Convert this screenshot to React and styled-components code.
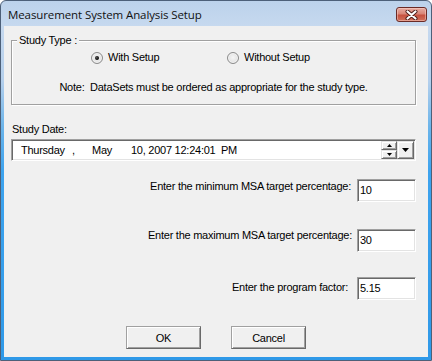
import React from "react";
import styled, { createGlobalStyle } from "styled-components";

const Global = createGlobalStyle`
  html, body { margin: 0; padding: 0; background: #ffffff; }
  body { width: 432px; height: 361px; overflow: hidden; }
`;

const Window = styled.div`
  width: 432px;
  height: 361px;
  box-sizing: border-box;
  display: flex;
  flex-direction: column;
  border: 1px solid #4d6079;
  border-radius: 6px 6px 0 0;
  padding: 0 3px 3px 3px;
  background: linear-gradient(
    to bottom,
    #bcd2eb 0px,
    #c6d9ef 25px,
    #b4cfec 80px,
    #6db5ea 125px,
    #3da3ee 170px,
    #2f99e8 361px
  );
`;

const TitleBar = styled.div`
  height: 25px;
  flex: none;
  display: flex;
  align-items: flex-start;
  padding-left: 4px;
`;

const Title = styled.div`
  font-family: "Open Sans", "Noto Sans", sans-serif;
  font-size: 11.5px;
  line-height: 16px;
  margin-top: 6px;
  color: #111;
  letter-spacing: -0.1px;
`;

const CloseButton = styled.div`
  margin-left: auto;
  margin-top: 6px;
  margin-right: 1px;
  width: 31px;
  height: 15px;
  box-sizing: border-box;
  border: 1px solid #6a2b27;
  border-radius: 3px;
  background: linear-gradient(to bottom, #e6aca2 0%, #d98576 45%, #c6513f 55%, #d0715c 100%);
  box-shadow: inset 0 0 0 1px rgba(255, 220, 210, 0.45);
  display: flex;
  align-items: center;
  justify-content: center;
`;

const Client = styled.div`
  flex: 1;
  background: #f0f0f0;
  display: flex;
  flex-direction: column;
  padding: 14px 12px 0 7px;
  font-family: "Liberation Sans", Arial, sans-serif;
  font-size: 11px;
  line-height: 13px;
  letter-spacing: -0.25px;
  color: #000;
`;

const Group = styled.div`
  position: relative;
  height: 65px;
  box-sizing: border-box;
  border: 1px solid #a0a0a0;
  box-shadow: inset 1px 1px 0 #ffffff, 1px 1px 0 #ffffff;
`;

const Legend = styled.span`
  position: absolute;
  top: -7px;
  left: 5px;
  padding: 0 2px;
  background: #f0f0f0;
`;

const RadioRow = styled.div`
  display: grid;
  grid-template-columns: 136px auto;
  align-items: center;
  height: 12px;
  margin-top: 10px;
  padding-left: 79px;
`;

const Option = styled.label`
  display: flex;
  align-items: center;
  gap: 5px;
`;

const RadioCircle = styled.span`
  position: relative;
  width: 12px;
  height: 12px;
  box-sizing: border-box;
  border-radius: 50%;
  border: 1px solid #8b8b8b;
  background: radial-gradient(circle at 50% 45%, #f6f6f6 0%, #e6e6e6 55%, #cfcfcf 100%);
  box-shadow: inset 0 0 0 1px #f4f4f4;
  &::after {
    content: "";
    display: ${(p) => (p.checked ? "block" : "none")};
    position: absolute;
    left: 3px;
    top: 3px;
    width: 4px;
    height: 4px;
    border-radius: 50%;
    background: radial-gradient(circle at 40% 40%, #555 0%, #000 70%);
  }
`;

const Note = styled.div`
  margin-top: 18px;
  text-align: center;
`;

const FieldLabel = styled.div`
  margin: 18px 0 0 1px;
`;

const DateBox = styled.div`
  margin-top: 3px;
  height: 22px;
  box-sizing: border-box;
  display: flex;
  align-items: center;
  background: #fff;
  border-style: solid;
  border-width: 1px;
  border-color: #a0a0a0 #ffffff #ffffff #a0a0a0;
  box-shadow: inset 1px 1px 0 #696969, inset -1px -1px 0 #e3e3e3;
  padding-left: 9px;
  padding-right: 1px;
`;

const Seg = styled.span`
  display: inline-block;
  width: ${(p) => (p.$w ? `${p.$w}px` : "auto")};
  white-space: pre;
`;

const SpinGroup = styled.div`
  margin-left: auto;
  display: flex;
  height: 18px;
`;

const SpinColumn = styled.div`
  display: flex;
  flex-direction: column;
  width: 16px;
`;

const RaisedButton = styled.div`
  box-sizing: border-box;
  flex: ${(p) => (p.$grow ? 1 : "none")};
  width: ${(p) => (p.$w ? `${p.$w}px` : "auto")};
  background: #f0f0f0;
  border-style: solid;
  border-width: 1px;
  border-color: #e3e3e3 #696969 #696969 #e3e3e3;
  box-shadow: inset 1px 1px 0 #ffffff, inset -1px -1px 0 #a0a0a0;
  display: flex;
  align-items: center;
  justify-content: center;
`;

const FormRow = styled.div`
  display: flex;
  justify-content: flex-end;
  align-items: flex-start;
  gap: ${(p) => p.$gap}px;
  margin-top: ${(p) => p.$top}px;
`;

const RowLabel = styled.div`
  margin-top: ${(p) => p.$offset}px;
  white-space: nowrap;
`;

const TextInput = styled.div`
  width: 59px;
  height: 23px;
  box-sizing: border-box;
  background: #fff;
  border-style: solid;
  border-width: 1px;
  border-color: #a0a0a0 #ffffff #ffffff #a0a0a0;
  box-shadow: inset 1px 1px 0 #696969, inset -1px -1px 0 #e3e3e3;
  padding: 4px 0 0 2px;
`;

const ButtonRow = styled.div`
  display: flex;
  justify-content: center;
  gap: 30px;
  margin-top: 26px;
  padding-left: 5px;
`;

const DialogButton = styled.div`
  width: 75px;
  height: 23px;
  box-sizing: border-box;
  background: #f0f0f0;
  border-style: solid;
  border-width: 1px;
  border-color: #a0a0a0 #696969 #696969 #a0a0a0;
  box-shadow: inset 1px 1px 0 #ffffff, inset -1px -1px 0 #a0a0a0;
  display: flex;
  align-items: center;
  justify-content: center;
  padding-top: 1px;
`;

const Arrow = ({ dir, w = 5, h = 3 }) => (
  <svg width={w} height={h} viewBox={`0 0 ${w} ${h}`}>
    {dir === "up" ? (
      <polygon points={`0,${h} ${w},${h} ${w / 2},0`} fill="#000" />
    ) : (
      <polygon points={`0,0 ${w},0 ${w / 2},${h}`} fill="#000" />
    )}
  </svg>
);

const CloseGlyph = () => (
  <svg width="13" height="10" viewBox="0 0 13 10">
    <path d="M2.5 1.5 L10.5 8.5 M10.5 1.5 L2.5 8.5" stroke="#4a1a16" strokeWidth="4" strokeLinecap="round" />
    <path d="M2.5 1.5 L10.5 8.5 M10.5 1.5 L2.5 8.5" stroke="#ffffff" strokeWidth="2.2" strokeLinecap="round" />
  </svg>
);

export default function App() {
  return (
    <>
      <Global />
      <Window>
        <TitleBar>
          <Title>Measurement System Analysis Setup</Title>
          <CloseButton>
            <CloseGlyph />
          </CloseButton>
        </TitleBar>
        <Client>
          <Group>
            <Legend>Study Type :</Legend>
            <RadioRow>
              <Option>
                <RadioCircle checked />
                <span>With Setup</span>
              </Option>
              <Option>
                <RadioCircle />
                <span>Without Setup</span>
              </Option>
            </RadioRow>
            <Note>Note:&nbsp; DataSets must be ordered as appropriate for the study type.</Note>
          </Group>

          <FieldLabel>Study Date:</FieldLabel>
          <DateBox>
            <Seg $w={51}>Thursday</Seg>
            <Seg $w={20}>,</Seg>
            <Seg $w={39}>May</Seg>
            <Seg $w={90}>10, 2007 12:24:01</Seg>
            <Seg>PM</Seg>
            <SpinGroup>
              <SpinColumn>
                <RaisedButton $grow>
                  <Arrow dir="up" />
                </RaisedButton>
                <RaisedButton $grow>
                  <Arrow dir="down" />
                </RaisedButton>
              </SpinColumn>
              <RaisedButton $w={17}>
                <Arrow dir="down" w={7} h={4} />
              </RaisedButton>
            </SpinGroup>
          </DateBox>

          <FormRow $top={18} $gap={6}>
            <RowLabel $offset={1}>Enter the minimum MSA target percentage:</RowLabel>
            <TextInput>10</TextInput>
          </FormRow>
          <FormRow $top={27} $gap={5}>
            <RowLabel $offset={0}>Enter the maximum MSA target percentage:</RowLabel>
            <TextInput>30</TextInput>
          </FormRow>
          <FormRow $top={25} $gap={9}>
            <RowLabel $offset={4}>Enter the program factor:</RowLabel>
            <TextInput>5.15</TextInput>
          </FormRow>

          <ButtonRow>
            <DialogButton>OK</DialogButton>
            <DialogButton>Cancel</DialogButton>
          </ButtonRow>
        </Client>
      </Window>
    </>
  );
}
